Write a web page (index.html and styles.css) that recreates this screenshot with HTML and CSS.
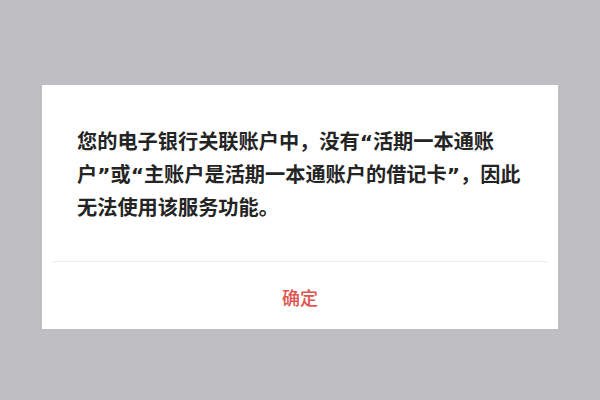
FILE: index.html
```html
<!DOCTYPE html>
<html lang="zh-CN">
<head>
<meta charset="utf-8">
<link rel="stylesheet" href="styles.css">
</head>
<body>
<div class="dialog">
  <p class="message">您的电子银行关联账户中，没有“活期一本通账<br>户”或“主账户是活期一本通账户的借记卡”，因此<br>无法使用该服务功能。</p>
  <div class="divider"></div>
  <div class="actions"><span class="confirm">确定</span></div>
</div>
</body>
</html>
```
FILE: styles.css
```css
html, body {
  margin: 0;
  padding: 0;
}
body {
  width: 600px;
  height: 400px;
  background: #bfbfc3;
  padding-top: 85px;
  box-sizing: border-box;
  font-family: "Noto Sans CJK SC", "Noto Sans", sans-serif;
}
.dialog {
  margin: 0 42px;
  width: 516px;
  height: 244px;
  background: #ffffff;
  display: flex;
  flex-direction: column;
}
.message {
  margin: 0;
  padding: 41px 20px 0 35px;
  font-family: "DejaVu Sans", "Noto Sans CJK SC", sans-serif;
  font-size: 20.2px;
  line-height: 33px;
  font-weight: 600;
  color: #242424;
  white-space: nowrap;
}
.divider {
  margin: 36px 11px 0 11px;
  height: 1px;
  background: #ececec;
}
.actions {
  flex: 1;
  display: flex;
  align-items: center;
  justify-content: center;
  padding-top: 2px;
}
.confirm {
  font-size: 18px;
  color: #e0544f;
  font-weight: 500;
}
```
